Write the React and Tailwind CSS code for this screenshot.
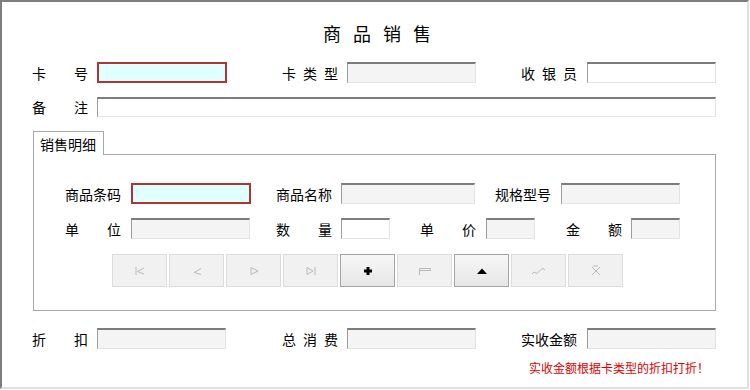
import React from 'react';

// Sales entry form (商品销售), old WinForms look

const Label = ({ text, className = '' }) => (
  <div className={`flex w-14 shrink-0 justify-between text-[14px] leading-none text-black ${className}`}>
    {text.split('').map((c, i) => (
      <span key={i}>{c}</span>
    ))}
  </div>
);

const Field = ({ kind = 'white', className = '' }) => {
  if (kind === 'focus') {
    return <div className={`shrink-0 border-2 border-[#b03434] bg-[#e0ffff] ${className}`} />;
  }
  const bg = kind === 'gray' ? 'bg-[#f4f4f4]' : 'bg-white';
  return (
    <div
      className={`shrink-0 border-t-2 border-l border-r border-b border-t-[#7c7c7c] border-l-[#9c9c9c] border-r-[#e3e3e3] border-b-[#e3e3e3] ${bg} ${className}`}
    />
  );
};

const G = '#b9b9b9';

const icons = {
  first: (
    <svg width="12" height="10" viewBox="0 0 12 10">
      <path d="M2 1 V9 M10 2 L3.5 5.5 L10 8" fill="none" stroke={G} strokeWidth="1" />
    </svg>
  ),
  prev: (
    <svg width="12" height="10" viewBox="0 0 12 10">
      <path d="M10 2.5 L3 6.5 L10 8.5" fill="none" stroke={G} strokeWidth="1" />
    </svg>
  ),
  next: (
    <svg width="12" height="10" viewBox="0 0 12 10">
      <path d="M3 1.5 V8.5 L10 5 Z" fill="none" stroke={G} strokeWidth="1" />
    </svg>
  ),
  last: (
    <svg width="12" height="10" viewBox="0 0 12 10">
      <path d="M2 1.5 V8.5 L8 5 Z M10 1 V9" fill="none" stroke={G} strokeWidth="1" />
    </svg>
  ),
  add: (
    <svg width="10" height="10" viewBox="0 0 10 10">
      <path d="M5 1 V9 M1 5 H9" fill="none" stroke="#000" strokeWidth="3" />
    </svg>
  ),
  edit: (
    <svg width="14" height="10" viewBox="0 0 14 10">
      <path d="M1.5 9 V2.5 H12.5 V4.5 H2" fill="none" stroke={G} strokeWidth="1" />
    </svg>
  ),
  up: (
    <svg width="12" height="8" viewBox="0 0 12 8">
      <path d="M1 7 L6 1.5 L11 7 Z" fill="#000" />
    </svg>
  ),
  save: (
    <svg width="16" height="10" viewBox="0 0 16 10">
      <path d="M1 8 L3 6 L6 7.5 L10 3.5 L12 2.5 L14 4" fill="none" stroke={G} strokeWidth="1" />
    </svg>
  ),
  cancel: (
    <svg width="12" height="12" viewBox="0 0 12 12">
      <path d="M2 2 L10 10 M10 2 L5 7 L2 10 M3 1 L8 1" fill="none" stroke={G} strokeWidth="1" />
    </svg>
  ),
};

const buttons = [
  { key: 'first', enabled: false },
  { key: 'prev', enabled: false },
  { key: 'next', enabled: false },
  { key: 'last', enabled: false },
  { key: 'add', enabled: true },
  { key: 'edit', enabled: false },
  { key: 'up', enabled: true },
  { key: 'save', enabled: false },
  { key: 'cancel', enabled: false },
];

export default function App() {
  return (
    <div
      className="h-[390px] w-[750px] bg-white"
      style={{ fontFamily: '"Noto Sans CJK SC", "Noto Sans", sans-serif' }}
    >
      <div className="h-[389px] w-[749px] border-t-2 border-l-2 border-r-2 border-b-2 border-t-[#7e7e7e] border-l-[#7e7e7e] border-r-[#e0e0e0] border-b-[#e0e0e0]">
        {/* title */}
        <div className="mt-[22px] pl-[321px] text-[18px] leading-[18px] tracking-[12px] text-black">
          商品销售
        </div>

        <div className="pl-[30px]">
          {/* row 1 */}
          <div className="mt-[20px] flex h-[21px] items-center">
            <Label text="卡号" />
            <Field kind="focus" className="ml-[9px] h-[21px] w-[130px]" />
            <Label text="卡类型" className="ml-[55px]" />
            <Field kind="gray" className="ml-[9px] h-[21px] w-[129px]" />
            <Label text="收银员" className="ml-[45px]" />
            <Field className="ml-[10px] h-[21px] w-[129px]" />
          </div>

          {/* row 2 */}
          <div className="mt-[14px] flex h-[20px] items-center">
            <Label text="备注" />
            <Field className="ml-[9px] h-[20px] w-[619px]" />
          </div>

          {/* tab + group */}
          <div className="ml-px mt-[14px] w-[683px]">
            <div className="relative z-10 -mb-px flex h-[24px] w-[71px] items-center border-t border-l border-r border-[#a8a8a8] bg-white pl-[6px] text-[14px] leading-none text-black">
              销售明细
            </div>
            <div className="h-[157px] border border-[#a8a8a8] bg-white pl-[31px] pt-[28px]">
              <div className="flex h-[21px] items-center">
                <Label text="商品条码" />
                <Field kind="focus" className="ml-[10px] h-[21px] w-[120px]" />
                <Label text="商品名称" className="ml-[25px]" />
                <Field kind="gray" className="ml-[9px] h-[21px] w-[134px]" />
                <Label text="规格型号" className="ml-[20px]" />
                <Field kind="gray" className="ml-[10px] h-[21px] w-[119px]" />
              </div>

              <div className="mt-[14px] flex h-[21px] items-center">
                <Label text="单位" />
                <Field kind="gray" className="ml-[10px] h-[21px] w-[119px]" />
                <Label text="数量" className="ml-[26px]" />
                <Field className="ml-[9px] h-[21px] w-[49px]" />
                <Label text="单价" className="ml-[30px]" />
                <Field kind="gray" className="ml-[10px] h-[21px] w-[49px]" />
                <Label text="金额" className="ml-[31px]" />
                <Field kind="gray" className="ml-[9px] h-[21px] w-[49px]" />
              </div>

              <div className="ml-[47px] mt-[15px] flex gap-[2px]">
                {buttons.map((b) => (
                  <div
                    key={b.key}
                    className={
                      b.enabled
                        ? 'flex h-[33px] w-[55px] items-center justify-center border border-[#a4a4a4] bg-gradient-to-b from-[#f7f7f7] to-[#e6e6e6]'
                        : 'flex h-[33px] w-[55px] items-center justify-center border border-[#dcdcdc] bg-[#f1f1f1]'
                    }
                  >
                    {icons[b.key]}
                  </div>
                ))}
              </div>
            </div>
          </div>

          {/* bottom row */}
          <div className="mt-[17px] flex h-[21px] items-center">
            <Label text="折扣" />
            <Field kind="gray" className="ml-[9px] h-[21px] w-[129px]" />
            <Label text="总消费" className="ml-[56px]" />
            <Field kind="gray" className="ml-[9px] h-[21px] w-[129px]" />
            <Label text="实收金额" className="ml-[45px]" />
            <Field kind="gray" className="ml-[10px] h-[21px] w-[129px]" />
          </div>

          <div className="ml-[497px] mt-[13px] text-[12px] leading-none text-[#e00000]">
            实收金额根据卡类型的折扣打折！
          </div>
        </div>
      </div>
    </div>
  );
}
